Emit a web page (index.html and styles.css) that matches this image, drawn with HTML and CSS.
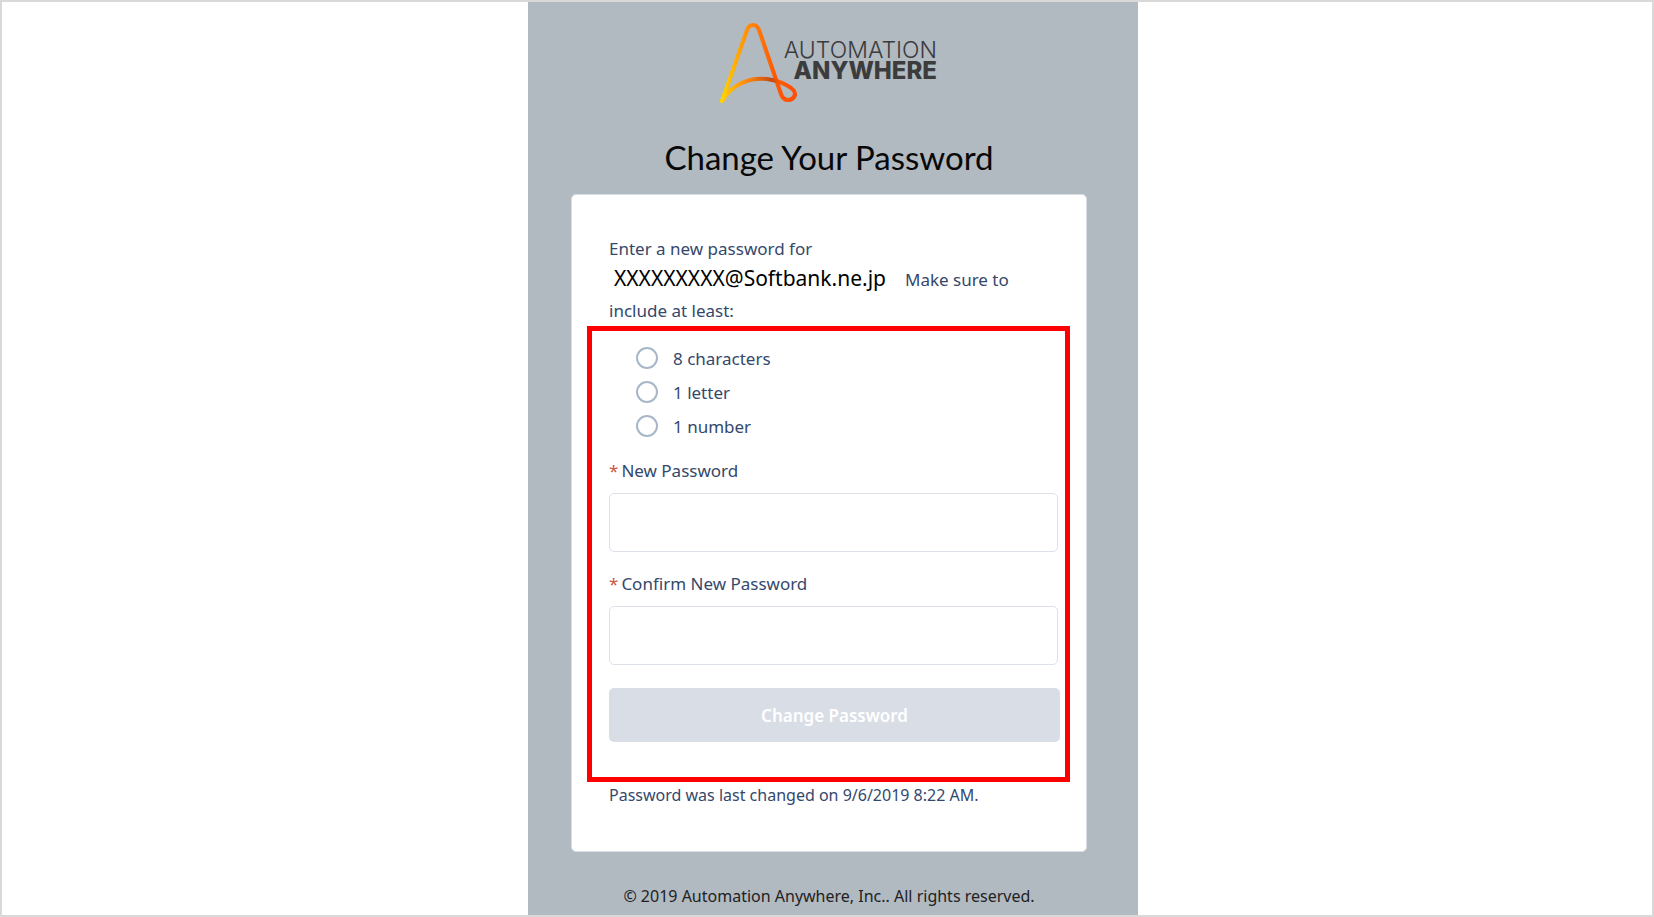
FILE: index.html
```html
<!DOCTYPE html>
<html lang="en">
<head>
    <meta charset="UTF-8">
    <meta name="viewport" content="width=device-width, initial-scale=1.0">
    <title>Change Your Password | Automation Anywhere</title>
    <link rel="stylesheet" href="styles.css">
</head>
<body>

<main class="page">
    <header>
        <svg class="logo" width="222" height="84" viewBox="0 0 222 84" role="img" aria-label="Automation Anywhere">
            <defs>
                <linearGradient id="stroke" gradientUnits="userSpaceOnUse" x1="2" y1="0" x2="74" y2="0">
                    <stop offset="0" stop-color="#ffd800"/>
                    <stop offset="0.4" stop-color="#ff8a0c"/>
                    <stop offset="0.75" stop-color="#ff5a00"/>
                    <stop offset="1" stop-color="#ff4f0a"/>
                </linearGradient>
                <linearGradient id="loop" gradientUnits="userSpaceOnUse" x1="2" y1="0" x2="76" y2="0">
                    <stop offset="0" stop-color="#ffd800"/>
                    <stop offset="0.35" stop-color="#ff8a0c"/>
                    <stop offset="0.7" stop-color="#c94a10"/>
                    <stop offset="0.8" stop-color="#ff5a00"/>
                    <stop offset="1" stop-color="#ff4f0a"/>
                </linearGradient>
            </defs>
            <path d="M4 79 L29 8 Q31 3 35 3 Q39 3 41 8 L63 72 Q65 78 70 78 Q75 78 77 73" fill="none" stroke="url(#stroke)" stroke-width="4" stroke-linecap="round"/>
            <path d="M4 79 C14 62 32 55 49 57 C63 59 77 66 77 72 Q76 78 70 78" fill="none" stroke="url(#loop)" stroke-width="4" stroke-linecap="round"/>
            <text class="logo-thin" x="219" y="36" text-anchor="end">AUTOMATION</text>
            <text class="logo-bold" x="219" y="57" text-anchor="end">ANYWHERE</text>
        </svg>
    </header>

    <h1>Change Your Password</h1>

    <form class="card">
        <p class="intro">
            Enter a new password for<br>
            <span class="email">XXXXXXXXX@Softbank.ne.jp</span>Make sure to<br>
            include at least:
        </p>

        <div class="highlight">
            <ul class="rules">
                <li><input type="radio" id="ruleLength" disabled><label for="ruleLength">8 characters</label></li>
                <li><input type="radio" id="ruleLetter" disabled><label for="ruleLetter">1 letter</label></li>
                <li><input type="radio" id="ruleNumber" disabled><label for="ruleNumber">1 number</label></li>
            </ul>

            <div class="form-group">
                <label for="newPassword"><span class="required">*</span>New Password</label>
                <input type="password" id="newPassword">
            </div>

            <div class="form-group">
                <label for="confirmPassword"><span class="required">*</span>Confirm New Password</label>
                <input type="password" id="confirmPassword">
            </div>

            <button type="submit" disabled>Change Password</button>
        </div>

        <p class="last-changed">Password was last changed on 9/6/2019 8:22 AM.</p>
    </form>

    <footer>© 2019 Automation Anywhere, Inc.. All rights reserved.</footer>
</main>

</body>
</html>
```
FILE: styles.css
```css
* {
    box-sizing: border-box;
}

body {
    font-family: "Noto Sans", "Open Sans", sans-serif;
    font-size: 17px;
    color: #34486b;
    background-color: #fff;
    border: 2px solid #d9d9d9;
    margin: 0;
    min-height: 100vh;
    padding-left: 12px;
    display: flex;
    justify-content: center;
}

.page {
    width: 100%;
    max-width: 610px;
    padding: 20px 51px 7px 43px;
    background-color: #b1b9c1;
}

header {
    text-align: center;
}

.logo {
    display: block;
    margin: 0 auto;
}

.logo-thin,
.logo-bold {
    font-family: Inter, sans-serif;
    fill: #3c3c3c;
}

.logo-thin {
    font-size: 23px;
    font-weight: 300;
}

.logo-bold {
    font-size: 24px;
    font-weight: 800;
}

h1 {
    margin: 27px 0 13px;
    font-family: Lato, "Noto Sans", sans-serif;
    font-size: 33px;
    line-height: 48px;
    font-weight: 400;
    text-align: center;
    color: #080808;
}

.card {
    background-color: #fff;
    border: 1px solid #d8dde6;
    border-radius: 5px;
    padding: 38px 16px 43px 15px;
}

.intro {
    margin: 0;
    padding: 0 22px;
    line-height: 31px;
}

.email {
    margin: 0 19px 0 5px;
    font-size: 21px;
    line-height: 24px;
    color: #000;
}

/* red frame around the fields to fill in */
.highlight {
    border: 5px solid #f00;
    padding: 10px 5px 35px 17px;
}

.rules {
    list-style: none;
    margin: 0 0 16px;
    padding: 0 0 0 27px;
}

.rules li {
    display: flex;
    align-items: center;
    gap: 15px;
    height: 34px;
}

.rules input {
    appearance: none;
    width: 22px;
    height: 22px;
    margin: 0;
    border: 2px solid #a8b7c7;
    border-radius: 50%;
    background-color: #fff;
}

.form-group {
    margin: 0 2px 20px 0;
}

.form-group label {
    display: block;
    line-height: 24px;
    margin-bottom: 10px;
}

.form-group input {
    display: block;
    width: 100%;
    height: 59px;
    padding: 0 16px;
    font: inherit;
    border: 1px solid #dde1ea;
    border-radius: 5px;
    background-color: #fff;
}

.required {
    margin-right: 3px;
    color: #d0563f;
}

button {
    display: block;
    width: 100%;
    height: 54px;
    margin-top: 23px;
    border: none;
    border-radius: 5px;
    background-color: #d8dde6;
    color: #fff;
    font-family: inherit;
    font-size: 17px;
    font-weight: 600;
}

.last-changed {
    margin: 0;
    padding: 0 22px;
    font-size: 16px;
    line-height: 26px;
}

footer {
    margin-top: 32px;
    font-size: 16px;
    line-height: 24px;
    text-align: center;
    color: #222;
}
```
